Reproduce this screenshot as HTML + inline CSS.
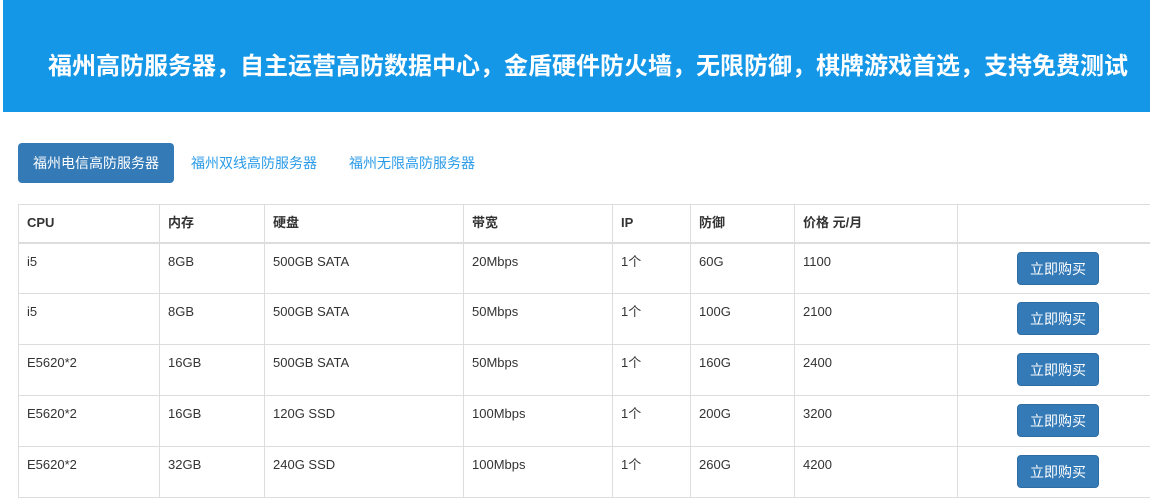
<!DOCTYPE html>
<html><head><meta charset="utf-8"><style>
*{margin:0;padding:0;box-sizing:border-box}
body{width:1150px;height:490px;overflow:hidden;background:#fff;font-family:"Liberation Sans","Noto Sans CJK SC",sans-serif;font-size:13px;color:#333;position:relative}
.banner{position:absolute;left:3px;top:0;width:1147px;height:112px;background:#1597e8}
.banner h1{position:absolute;left:45px;top:46px;font-size:24px;font-weight:bold;color:#fff;white-space:nowrap;letter-spacing:0}
.tab{position:absolute;top:143px;height:40px;line-height:40px;font-size:14px;color:#2a9be8}
.tab.active{left:18px;width:156px;background:#337ab7;color:#fff;border-radius:4px;text-align:center}
table{position:absolute;left:18px;top:204px;border-collapse:collapse;width:1150px}
td,th{border:1px solid #ddd;text-align:left;vertical-align:top;padding:0 8px;font-size:13px}
th{height:38px;line-height:36px;font-weight:bold;border-bottom:2px solid #ddd}
td{height:51px;padding-top:10px;line-height:16px}
.btn{display:block;margin:-2px 0 0 51px;width:82px;height:33px;line-height:33px;text-align:center;background:#337ab7;border:1px solid #2e6da4;border-radius:4px;color:#fff;font-size:14px}
</style></head><body>
<div class="banner"><h1>福州高防服务器，自主运营高防数据中心，金盾硬件防火墙，无限防御，棋牌游戏首选，支持免费测试</h1></div>
<div class="tab active">福州电信高防服务器</div>
<div class="tab" style="left:191px">福州双线高防服务器</div>
<div class="tab" style="left:349px">福州无限高防服务器</div>
<table>
<colgroup><col style="width:141px"><col style="width:105px"><col style="width:199px"><col style="width:149px"><col style="width:78px"><col style="width:104px"><col style="width:163px"><col></colgroup>
<tr><th>CPU</th><th>内存</th><th>硬盘</th><th>带宽</th><th>IP</th><th>防御</th><th>价格 元/月</th><th></th></tr>
<tr><td>i5</td><td>8GB</td><td>500GB SATA</td><td>20Mbps</td><td>1个</td><td>60G</td><td>1100</td><td><span class="btn">立即购买</span></td></tr>
<tr><td>i5</td><td>8GB</td><td>500GB SATA</td><td>50Mbps</td><td>1个</td><td>100G</td><td>2100</td><td><span class="btn">立即购买</span></td></tr>
<tr><td>E5620*2</td><td>16GB</td><td>500GB SATA</td><td>50Mbps</td><td>1个</td><td>160G</td><td>2400</td><td><span class="btn">立即购买</span></td></tr>
<tr><td>E5620*2</td><td>16GB</td><td>120G SSD</td><td>100Mbps</td><td>1个</td><td>200G</td><td>3200</td><td><span class="btn">立即购买</span></td></tr>
<tr><td>E5620*2</td><td>32GB</td><td>240G SSD</td><td>100Mbps</td><td>1个</td><td>260G</td><td>4200</td><td><span class="btn">立即购买</span></td></tr>
</table>
</body></html>
